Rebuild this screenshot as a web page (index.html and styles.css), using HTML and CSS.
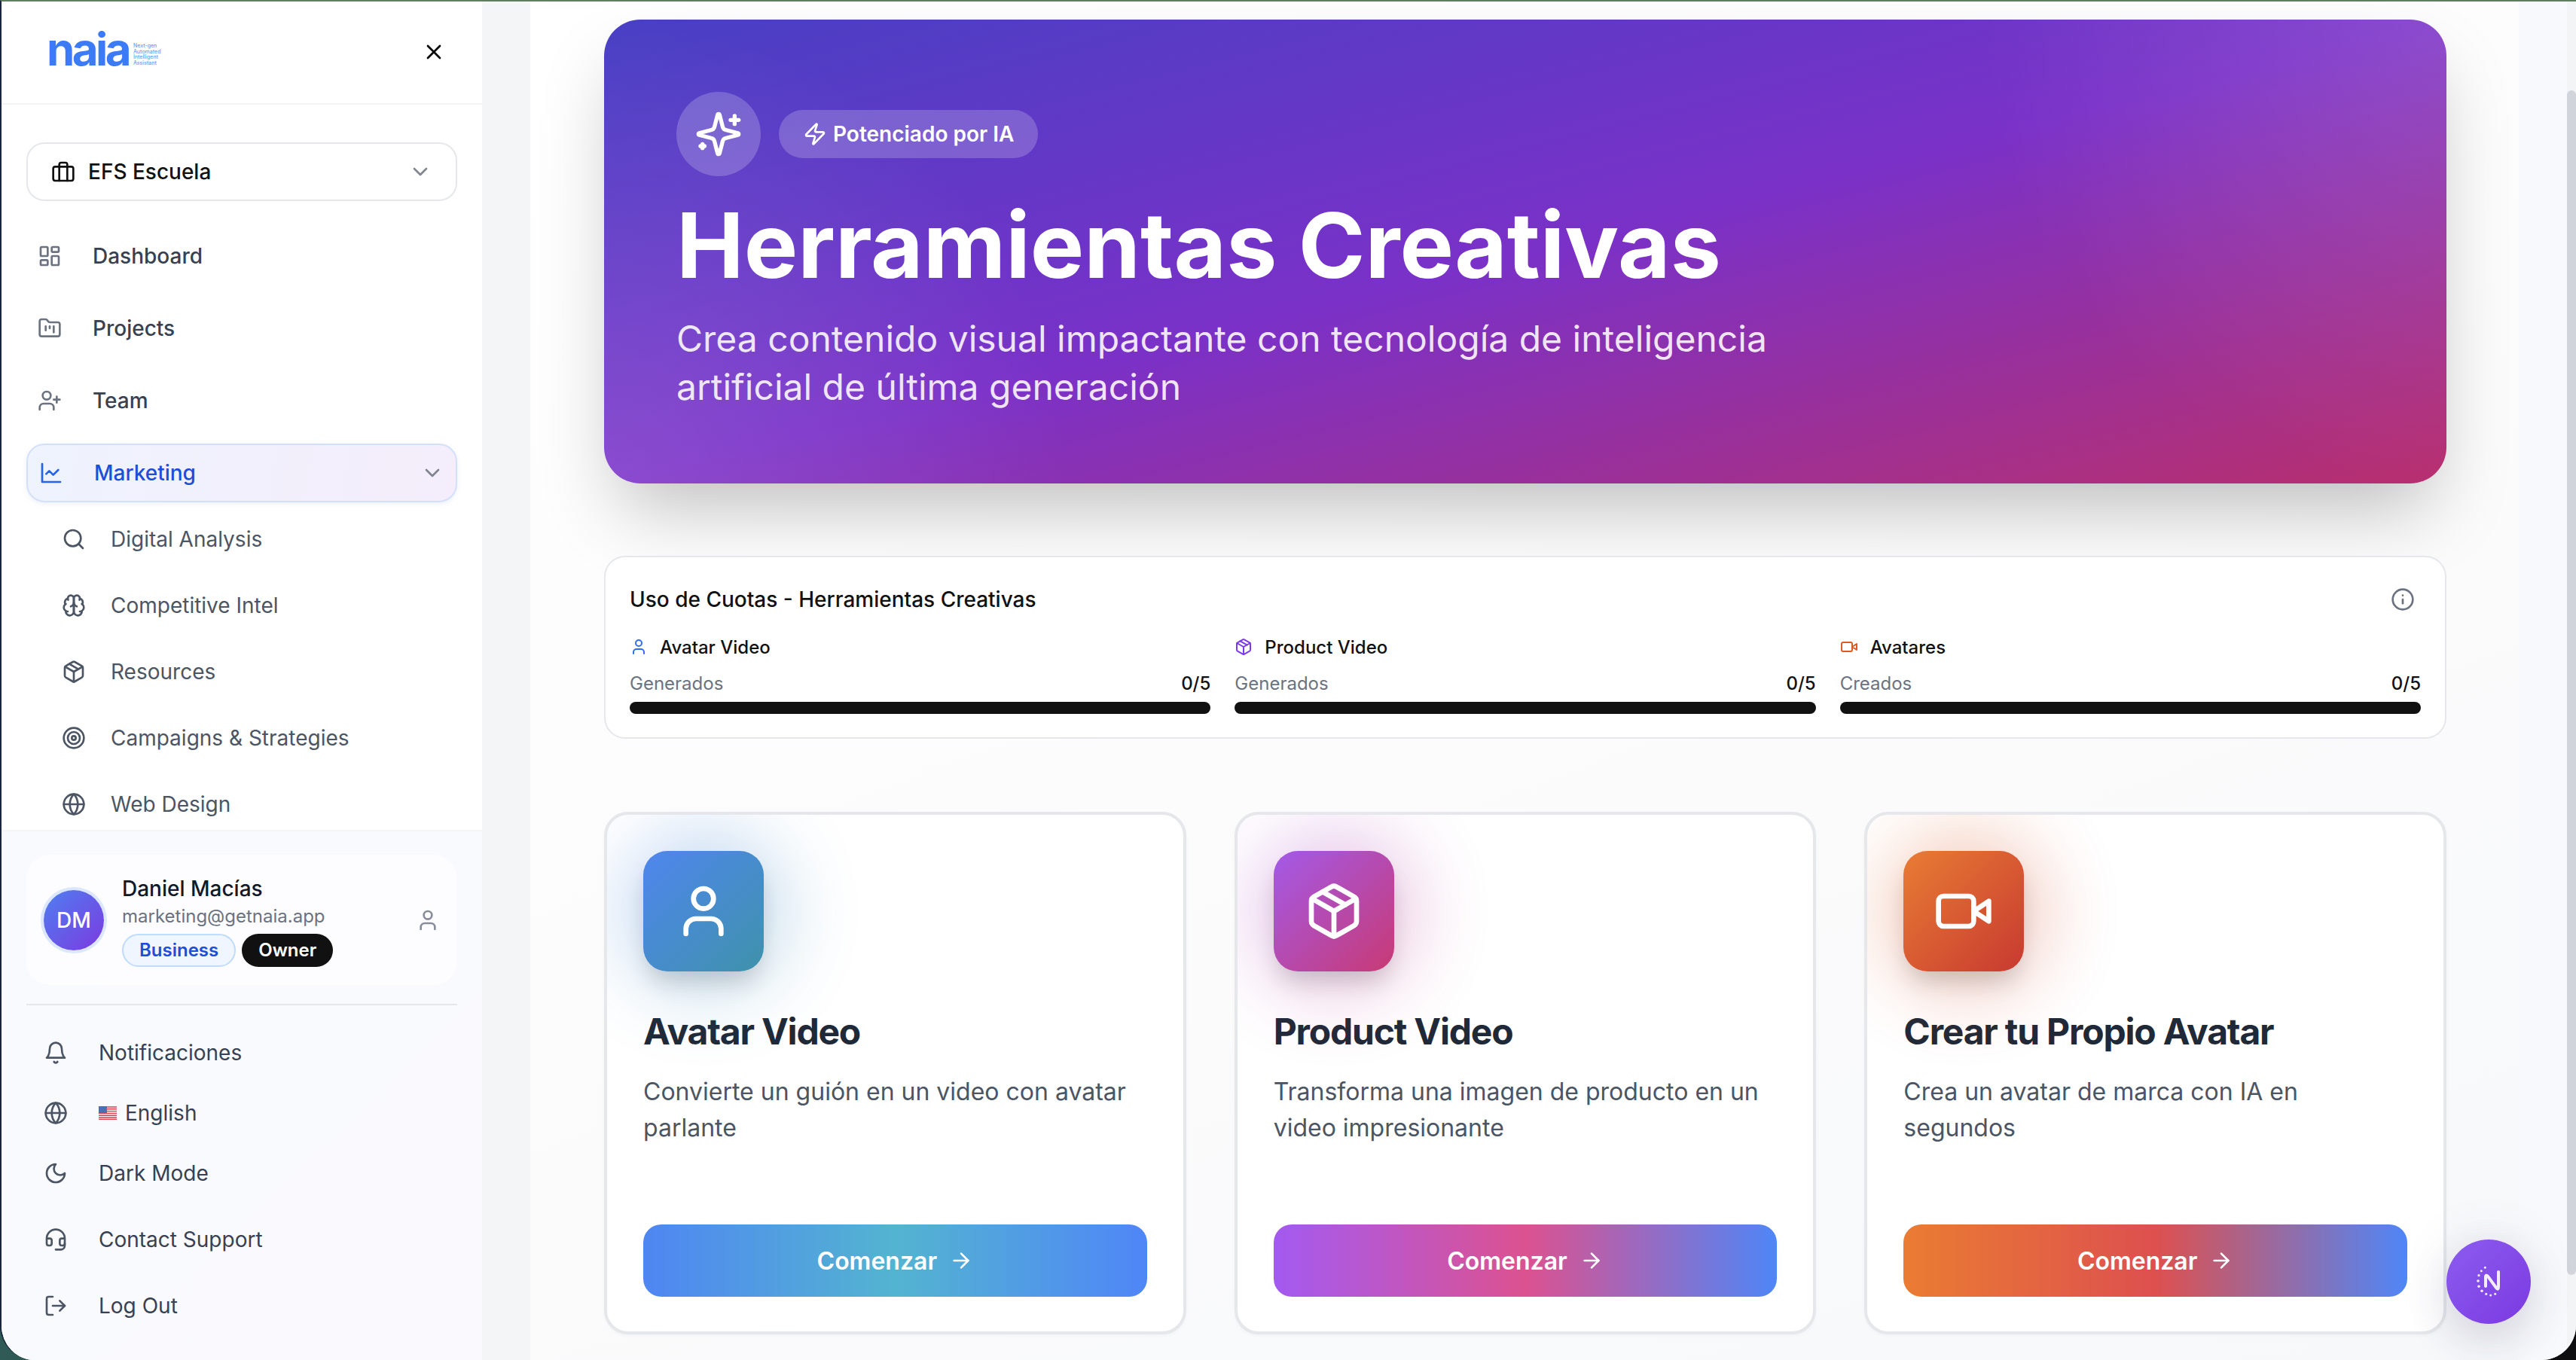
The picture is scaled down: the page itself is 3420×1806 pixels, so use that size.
FILE: index.html
```html
<!DOCTYPE html>
<html lang="es">
<head>
<meta charset="utf-8">
<title>Herramientas Creativas</title>
<link rel="stylesheet" href="styles.css">
</head>
<body>
<svg class="sprite" xmlns="http://www.w3.org/2000/svg">
  <symbol id="x" viewBox="0 0 24 24"><path d="M18 6 6 18"/><path d="m6 6 12 12"/></symbol>
  <symbol id="briefcase" viewBox="0 0 24 24"><path d="M16 21V5a2 2 0 0 0-2-2h-4a2 2 0 0 0-2 2v16"/><rect width="20" height="14" x="2" y="7" rx="2" ry="2"/></symbol>
  <symbol id="chev" viewBox="0 0 24 24"><path d="m6 9 6 6 6-6"/></symbol>
  <symbol id="dash" viewBox="0 0 24 24"><rect width="7" height="9" x="3" y="3" rx="1"/><rect width="7" height="5" x="14" y="3" rx="1"/><rect width="7" height="9" x="14" y="12" rx="1"/><rect width="7" height="5" x="3" y="16" rx="1"/></symbol>
  <symbol id="folder" viewBox="0 0 24 24"><path d="M4 20h16a2 2 0 0 0 2-2V8a2 2 0 0 0-2-2h-7.93a2 2 0 0 1-1.66-.9l-.82-1.2A2 2 0 0 0 7.93 3H4a2 2 0 0 0-2 2v13c0 1.1.9 2 2 2Z"/><path d="M8 10v4"/><path d="M12 10v2"/><path d="M16 10v6"/></symbol>
  <symbol id="userplus" viewBox="0 0 24 24"><path d="M16 21v-2a4 4 0 0 0-4-4H6a4 4 0 0 0-4 4v2"/><circle cx="9" cy="7" r="4"/><path d="M19 8v6"/><path d="M22 11h-6"/></symbol>
  <symbol id="chart" viewBox="0 0 24 24"><path d="M3 3v18h18"/><path d="m19 9-5 5-4-4-3 3"/></symbol>
  <symbol id="search" viewBox="0 0 24 24"><circle cx="11" cy="11" r="8"/><path d="m21 21-4.3-4.3"/></symbol>
  <symbol id="brain" viewBox="0 0 24 24"><path d="M12 5a3 3 0 1 0-5.997.125 4 4 0 0 0-2.526 5.77 4 4 0 0 0 .556 6.588A4 4 0 1 0 12 18Z"/><path d="M12 5a3 3 0 1 1 5.997.125 4 4 0 0 1 2.526 5.77 4 4 0 0 1-.556 6.588A4 4 0 1 1 12 18Z"/><path d="M15 13a4.5 4.5 0 0 1-3-4 4.5 4.5 0 0 1-3 4"/><path d="M17.599 6.5a3 3 0 0 0 .399-1.375"/><path d="M6.003 5.125A3 3 0 0 0 6.401 6.5"/><path d="M3.477 10.896a4 4 0 0 1 .585-.396"/><path d="M19.938 10.5a4 4 0 0 1 .585.396"/><path d="M6 18a4 4 0 0 1-1.967-.516"/><path d="M19.967 17.484A4 4 0 0 1 18 18"/></symbol>
  <symbol id="box" viewBox="0 0 24 24"><path d="m7.5 4.27 9 5.15"/><path d="M21 8a2 2 0 0 0-1-1.73l-7-4a2 2 0 0 0-2 0l-7 4A2 2 0 0 0 3 8v8a2 2 0 0 0 1 1.73l7 4a2 2 0 0 0 2 0l7-4A2 2 0 0 0 21 16Z"/><path d="m3.3 7 8.7 5 8.7-5"/><path d="M12 22V12"/></symbol>
  <symbol id="target" viewBox="0 0 24 24"><circle cx="12" cy="12" r="10"/><circle cx="12" cy="12" r="6"/><circle cx="12" cy="12" r="2"/></symbol>
  <symbol id="globe" viewBox="0 0 24 24"><circle cx="12" cy="12" r="10"/><path d="M12 2a14.5 14.5 0 0 0 0 20 14.5 14.5 0 0 0 0-20"/><path d="M2 12h20"/></symbol>
  <symbol id="user" viewBox="0 0 24 24"><path d="M19 21v-2a4 4 0 0 0-4-4H9a4 4 0 0 0-4 4v2"/><circle cx="12" cy="7" r="4"/></symbol>
  <symbol id="bell" viewBox="0 0 24 24"><path d="M6 8a6 6 0 0 1 12 0c0 7 3 9 3 9H3s3-2 3-9"/><path d="M10.3 21a1.94 1.94 0 0 0 3.4 0"/></symbol>
  <symbol id="moon" viewBox="0 0 24 24"><path d="M12 3a6 6 0 0 0 9 9 9 9 0 1 1-9-9Z"/></symbol>
  <symbol id="headset" viewBox="0 0 24 24"><path d="M3 11h3a2 2 0 0 1 2 2v3a2 2 0 0 1-2 2H5a2 2 0 0 1-2-2v-5Zm0 0a9 9 0 1 1 18 0m0 0v5a2 2 0 0 1-2 2h-1a2 2 0 0 1-2-2v-3a2 2 0 0 1 2-2h3Z"/><path d="M21 16v2a4 4 0 0 1-4 4h-5"/></symbol>
  <symbol id="logout" viewBox="0 0 24 24"><path d="M9 21H5a2 2 0 0 1-2-2V5a2 2 0 0 1 2-2h4"/><path d="m16 17 5-5-5-5"/><path d="M21 12H9"/></symbol>
  <symbol id="sparkles" viewBox="0 0 24 24"><path d="M9.937 15.5A2 2 0 0 0 8.5 14.063l-6.135-1.582a.5.5 0 0 1 0-.962L8.5 9.936A2 2 0 0 0 9.937 8.5l1.582-6.135a.5.5 0 0 1 .963 0L14.063 8.5A2 2 0 0 0 15.5 9.937l6.135 1.581a.5.5 0 0 1 0 .964L15.5 14.063a2 2 0 0 0-1.437 1.437l-1.582 6.135a.5.5 0 0 1-.963 0z"/><path d="M20 3v4"/><path d="M22 5h-4"/><path d="M4 17v2"/><path d="M5 18H3"/></symbol>
  <symbol id="zap" viewBox="0 0 24 24"><path d="M4 14a1 1 0 0 1-.78-1.63l9.9-10.2a.5.5 0 0 1 .86.46l-1.92 6.02A1 1 0 0 0 13 10h7a1 1 0 0 1 .78 1.63l-9.9 10.2a.5.5 0 0 1-.86-.46l1.92-6.02A1 1 0 0 0 11 14z"/></symbol>
  <symbol id="info" viewBox="0 0 24 24"><circle cx="12" cy="12" r="10"/><path d="M12 16v-4"/><path d="M12 8h.01"/></symbol>
  <symbol id="video" viewBox="0 0 24 24"><path d="m22 8-6 4 6 4V8Z"/><rect width="14" height="12" x="2" y="6" rx="2" ry="2"/></symbol>
  <symbol id="arrow" viewBox="0 0 24 24"><path d="M5 12h14"/><path d="m12 5 7 7-7 7"/></symbol>
</svg>

<div class="window">
  <aside class="sidebar">
    <header class="side-head">
      <div class="logo">
        <span class="logo-word">naia</span>
        <span class="logo-tag">Next-gen<br>Automated<br>Intelligent<br>Assistant</span>
      </div>
      <svg class="ic close"><use href="#x"/></svg>
    </header>

    <div class="side-scroll">
      <button class="workspace">
        <svg class="ic dark"><use href="#briefcase"/></svg>
        <span class="workspace-name">EFS Escuela</span>
        <svg class="ic chev"><use href="#chev"/></svg>
      </button>

      <nav class="nav">
        <a class="nav-item"><svg class="ic"><use href="#dash"/></svg><span>Dashboard</span></a>
        <a class="nav-item"><svg class="ic"><use href="#folder"/></svg><span>Projects</span></a>
        <a class="nav-item"><svg class="ic"><use href="#userplus"/></svg><span>Team</span></a>
        <a class="nav-item active"><svg class="ic"><use href="#chart"/></svg><span>Marketing</span><svg class="ic chev"><use href="#chev"/></svg></a>
      </nav>

      <div class="subnav">
        <a class="sub-item"><svg class="ic"><use href="#search"/></svg><span>Digital Analysis</span></a>
        <a class="sub-item"><svg class="ic"><use href="#brain"/></svg><span>Competitive Intel</span></a>
        <a class="sub-item"><svg class="ic"><use href="#box"/></svg><span>Resources</span></a>
        <a class="sub-item"><svg class="ic"><use href="#target"/></svg><span>Campaigns &amp; Strategies</span></a>
        <a class="sub-item"><svg class="ic"><use href="#globe"/></svg><span>Web Design</span></a>
      </div>
    </div>

    <footer class="side-foot">
      <div class="user-card">
        <div class="avatar">DM</div>
        <div class="user-info">
          <div class="user-name">Daniel Macías</div>
          <div class="user-mail">marketing@getnaia.app</div>
          <div class="badges">
            <span class="badge badge-plan">Business</span>
            <span class="badge badge-role">Owner</span>
          </div>
        </div>
        <svg class="ic user-ic"><use href="#user"/></svg>
      </div>
      <div class="divider"></div>
      <div class="links">
        <a class="link"><svg class="ic"><use href="#bell"/></svg><span>Notificaciones</span></a>
        <a class="link"><svg class="ic"><use href="#globe"/></svg>
          <svg class="flag" viewBox="0 0 24 18" xmlns="http://www.w3.org/2000/svg">
            <rect width="24" height="18" fill="#f4f4f6"/>
            <path d="M0 1h24M0 3.8h24M0 6.6h24M0 9.4h24M0 12.2h24M0 15h24M0 17.4h24" stroke="#d9424f" stroke-width="1.4"/>
            <rect width="11" height="9" y="0" fill="#4a6fb5"/>
          </svg>
          <span class="lang">English</span></a>
        <a class="link"><svg class="ic"><use href="#moon"/></svg><span>Dark Mode</span></a>
        <a class="link gap-top"><svg class="ic"><use href="#headset"/></svg><span>Contact Support</span></a>
        <a class="link gap-top"><svg class="ic"><use href="#logout"/></svg><span>Log Out</span></a>
      </div>
    </footer>
  </aside>

  <main class="main">
    <div class="content">
      <section class="hero">
        <div class="hero-top">
          <div class="hero-icon"><svg class="ic hero-spark"><use href="#sparkles"/></svg></div>
          <div class="hero-badge"><svg class="ic"><use href="#zap"/></svg><span>Potenciado por IA</span></div>
        </div>
        <h1 class="hero-title">Herramientas Creativas</h1>
        <p class="hero-sub">Crea contenido visual impactante con tecnología de inteligencia artificial de última generación</p>
      </section>

      <section class="quota">
        <div class="quota-head">
          <h2 class="quota-title">Uso de Cuotas - Herramientas Creativas</h2>
          <span class="quota-info"><svg class="ic"><use href="#info"/></svg></span>
        </div>
        <div class="quota-grid">
          <div class="quota-col">
            <div class="quota-label"><svg class="ic q-blue"><use href="#user"/></svg><span>Avatar Video</span></div>
            <div class="quota-row"><span class="muted">Generados</span><span>0/5</span></div>
            <div class="bar"></div>
          </div>
          <div class="quota-col">
            <div class="quota-label"><svg class="ic q-purple"><use href="#box"/></svg><span>Product Video</span></div>
            <div class="quota-row"><span class="muted">Generados</span><span>0/5</span></div>
            <div class="bar"></div>
          </div>
          <div class="quota-col">
            <div class="quota-label"><svg class="ic q-orange"><use href="#video"/></svg><span>Avatares</span></div>
            <div class="quota-row"><span class="muted">Creados</span><span>0/5</span></div>
            <div class="bar"></div>
          </div>
        </div>
      </section>

      <section class="cards">
        <article class="card card-blue">
          <div class="tile-wrap"><div class="glow"></div><div class="tile"><svg class="ic"><use href="#user"/></svg></div></div>
          <h3 class="card-title">Avatar Video</h3>
          <p class="card-desc">Convierte un guión en un video con avatar parlante</p>
          <button class="cta"><span>Comenzar</span><svg class="ic"><use href="#arrow"/></svg></button>
        </article>
        <article class="card card-pink">
          <div class="tile-wrap"><div class="glow"></div><div class="tile"><svg class="ic"><use href="#box"/></svg></div></div>
          <h3 class="card-title">Product Video</h3>
          <p class="card-desc">Transforma una imagen de producto en un video impresionante</p>
          <button class="cta"><span>Comenzar</span><svg class="ic"><use href="#arrow"/></svg></button>
        </article>
        <article class="card card-orange">
          <div class="tile-wrap"><div class="glow"></div><div class="tile"><svg class="ic"><use href="#video"/></svg></div></div>
          <h3 class="card-title">Crear tu Propio Avatar</h3>
          <p class="card-desc">Crea un avatar de marca con IA en segundos</p>
          <button class="cta"><span>Comenzar</span><svg class="ic"><use href="#arrow"/></svg></button>
        </article>
      </section>
    </div>
  </main>

  <div class="scrollbar"><div class="thumb"></div></div>

  <button class="fab" aria-label="Asistente">
    <svg class="fab-ic" viewBox="0 0 64 64" xmlns="http://www.w3.org/2000/svg">
      <path class="fab-n" d="M28 38V26q0-4 3-1l11 15q3 4 3-2V19"/>
      <g class="fab-dots">
        <circle cx="27.3" cy="13.3" r="1.5"/><circle cx="22.3" cy="17.7" r="1.5"/><circle cx="19" cy="23.7" r="1.6"/>
        <circle cx="18" cy="31" r="1.8"/><circle cx="19" cy="38.3" r="1.8"/><circle cx="23" cy="44.3" r="1.8"/>
        <circle cx="28.7" cy="48.3" r="1.6"/><circle cx="34.7" cy="50" r="1.5"/><circle cx="40.7" cy="48.3" r="1.5"/>
      </g>
    </svg>
  </button>
</div>
</body>
</html>
```
FILE: styles.css
```css
* { box-sizing: border-box; }
html, body { margin: 0; padding: 0; height: 100%; }
body {
  width: 3420px;
  height: 1806px;
  overflow: hidden;
  font-family: "Inter", "Liberation Sans", sans-serif;
  background: linear-gradient(90deg, #2f5a55 0%, #1a1f22 50%, #0e0e10 100%);
  color: #111;
}
.sprite { display: none; }
.ic {
  width: 32px;
  height: 32px;
  flex: none;
  fill: none;
  stroke: currentColor;
  stroke-width: 2;
  stroke-linecap: round;
  stroke-linejoin: round;
}
h1, h2, h3, p { margin: 0; }
button { font-family: inherit; border: 0; padding: 0; }

.window {
  position: relative;
  display: flex;
  height: 1806px;
  border-top: 2px solid #5f7d5f;
  border-left: 2px solid #18253c;
  border-radius: 0 0 46px 46px;
  overflow: hidden;
  background: #f8f9fc;
}

/* Sidebar */
.sidebar {
  width: 638px;
  flex: none;
  display: flex;
  flex-direction: column;
  background: #fff;
  z-index: 2;
}
.side-head {
  height: 137px;
  flex: none;
  display: flex;
  align-items: center;
  justify-content: space-between;
  padding: 0 48px 2px 60px;
  border-bottom: 2px solid #f3f4f6;
}
.logo { display: flex; align-items: flex-end; gap: 6px; color: #3b7bf8; height: 60px; }
.logo-word {
  font-size: 60px;
  line-height: 60px;
  font-weight: 700;
  letter-spacing: -3.6px;
  margin-bottom: 4px;
}
.logo-tag {
  font-size: 7px;
  line-height: 7.6px;
  font-weight: 500;
  color: #6d9ef8;
  margin-bottom: 11px;
}
.close { color: #000; }

.side-scroll {
  flex: 1;
  min-height: 0;
  overflow: hidden;
  padding: 50px 33px 0;
}
.workspace {
  display: flex;
  align-items: center;
  width: 572px;
  height: 78px;
  padding: 0 31px;
  gap: 17px;
  background: #fff;
  border: 2px solid #e5e7eb;
  border-radius: 24px;
  color: #111;
}
.workspace-name { font-size: 28px; font-weight: 500; flex: 1; text-align: left; }
.chev { color: #6b7280; opacity: .85; }
.dark { color: #111; }

.nav { display: flex; flex-direction: column; gap: 18px; margin-top: 34px; }
.nav-item {
  display: flex;
  align-items: center;
  height: 78px;
  padding: 0 15px;
  gap: 41px;
  font-size: 28px;
  font-weight: 500;
  color: #374151;
  border-radius: 24px;
}
.nav-item .ic { color: #6b7280; }
.nav-item.active {
  background: linear-gradient(100deg, #eef3fd, #f5edfb);
  border: 2px solid #d3e0fa;
  box-shadow: 0 2px 6px rgba(80, 100, 200, .10);
  color: #1d4ed8;
  padding: 0 15px;
}
.nav-item.active > span { flex: 1; }
.nav-item.active .ic:first-child { color: #2563eb; }
.nav-item.active .chev { color: #6b7280; }

.subnav { margin-top: 5px; padding-left: 30px; }
.sub-item {
  display: flex;
  align-items: center;
  height: 88px;
  gap: 33px;
  padding-left: 17px;
  font-size: 28px;
  color: #4b5563;
}
.sub-item .ic { color: #4b5563; }

.side-foot {
  flex: none;
  height: 704px;
  padding: 31px 33px 0;
  border-top: 2px solid #f3f4f6;
  background: linear-gradient(135deg, #f9fafe, #fafafe);
}
.user-card {
  display: flex;
  align-items: center;
  height: 173px;
  padding: 0 23px 0 20px;
  gap: 21px;
  border-radius: 32px;
  background: rgba(255, 255, 255, .6);
}
.avatar {
  width: 80px;
  height: 80px;
  margin: 0 3px;
  flex: none;
  border-radius: 50%;
  background: linear-gradient(135deg, #4f7ff0, #7c3ae0);
  box-shadow: 0 0 0 4px #dbe7fc;
  color: #fff;
  font-size: 28px;
  font-weight: 500;
  display: flex;
  align-items: center;
  justify-content: center;
}
.user-info { flex: 1; min-width: 0; }
.user-name { font-size: 28px; line-height: 40px; font-weight: 500; color: #111827; }
.user-mail { font-size: 24px; line-height: 34px; color: #6b7280; margin-bottom: 6px; }
.badges { display: flex; gap: 8px; }
.badge {
  height: 44px;
  display: flex;
  align-items: center;
  border-radius: 22px;
  font-size: 24px;
  font-weight: 600;
  padding: 0 22px;
}
.badge-plan { background: #eff6ff; border: 2px solid #bfdbfe; color: #1d4ed8; padding: 0 21px; }
.badge-role { background: #111; color: #fff; }
.user-ic { color: #6b7280; opacity: .8; }

.divider { height: 2px; margin-top: 25px; background: #e5e7eb; }
.links { margin-top: 23px; display: flex; flex-direction: column; }
.link {
  display: flex;
  align-items: center;
  height: 80px;
  padding-left: 23px;
  gap: 41px;
  font-size: 28px;
  color: #374151;
}
.link .ic { color: #4b5563; }
.gap-top { margin-top: 8px; }
.flag { width: 24px; height: 18px; flex: none; margin-right: -30px; }

/* Main */
.main {
  flex: 1;
  min-width: 0;
  padding: 0 64px;
  background: linear-gradient(90deg, #f4f5f7 0, #f8f9fc 100%);
}
.content {
  height: 100%;
  padding: 24px 96px 0 98px;
  background: linear-gradient(160deg, #ffffff 0%, #fbfbfc 60%, #f7f8fa 100%);
}
.hero {
  height: 616px;
  padding: 96px;
  border-radius: 48px;
  background:
    radial-gradient(circle at 100% 0, rgba(255,255,255,.13), transparent 620px),
    radial-gradient(circle at 0 100%, rgba(255,255,255,.13), transparent 620px),
    linear-gradient(to bottom right, #4840c4 0%, #7a31c8 50%, #b82f6e 100%);
  box-shadow: 0 50px 100px -20px rgba(0, 0, 0, .25);
  color: #fff;
}
.hero-top { display: flex; align-items: center; gap: 24px; }
.hero-icon {
  width: 112px;
  height: 112px;
  border-radius: 50%;
  background: rgba(255, 255, 255, .2);
  display: flex;
  align-items: center;
  justify-content: center;
}
.hero-spark { width: 64px; height: 64px; }
.hero-badge {
  height: 64px;
  display: flex;
  align-items: center;
  gap: 8px;
  padding: 0 32px;
  border-radius: 32px;
  background: rgba(255, 255, 255, .2);
  font-size: 28px;
  font-weight: 600;
}
.hero-title {
  margin-top: 32px;
  font-size: 120px;
  line-height: 120px;
  font-weight: 700;
}
.hero-sub {
  margin-top: 32px;
  max-width: 1536px;
  font-size: 48px;
  line-height: 64px;
  font-weight: 400;
  color: rgba(255, 255, 255, .88);
}

.quota {
  height: 243px;
  margin-top: 96px;
  padding: 32px 32px 0;
  border: 2px solid #e5e7eb;
  border-radius: 28px;
  background: #fff;
}
.quota-head { display: flex; align-items: center; justify-content: space-between; height: 48px; }
.quota-title { font-size: 28px; font-weight: 500; color: #111; }
.quota-info { width: 48px; height: 48px; display: flex; align-items: center; justify-content: center; color: #6b7280; }
.quota-grid { display: grid; grid-template-columns: repeat(3, 1fr); gap: 32px; margin-top: 23px; }
.quota-label { display: flex; align-items: center; gap: 16px; height: 32px; font-size: 24px; font-weight: 500; }
.quota-label .ic { width: 24px; height: 24px; }
.q-blue { color: #2f6fed; }
.q-purple { color: #7c3aed; }
.q-orange { color: #dd5b22; }
.quota-row {
  display: flex;
  justify-content: space-between;
  margin-top: 17px;
  font-size: 24px;
  line-height: 32px;
  font-weight: 500;
}
.muted { color: #6b7280; font-weight: 400; }
.bar { height: 16px; margin-top: 8px; border-radius: 8px; background: #111; }

.cards { display: grid; grid-template-columns: repeat(3, 1fr); gap: 64px; margin-top: 97px; }
.card {
  height: 694px;
  padding: 48px 48px 0;
  border: 4px solid #e5e7eb;
  border-radius: 32px;
  background: #fff;
  overflow: hidden;
  box-shadow: 0 2px 4px rgba(0, 0, 0, .03);
}
.tile-wrap { position: relative; width: 160px; height: 160px; }
.glow {
  position: absolute;
  inset: -28px;
  border-radius: 50%;
  filter: blur(52px);
  opacity: .32;
}
.tile {
  position: relative;
  width: 160px;
  height: 160px;
  border-radius: 32px;
  display: flex;
  align-items: center;
  justify-content: center;
  color: #fff;
  box-shadow: 0 20px 30px -6px rgba(0, 0, 0, .16);
}
.tile .ic { width: 80px; height: 80px; }
.card-title {
  margin-top: 48px;
  font-size: 48px;
  line-height: 64px;
  font-weight: 700;
  letter-spacing: -1.2px;
  color: #1f2937;
}
.card-desc {
  margin-top: 24px;
  height: 96px;
  font-size: 32px;
  line-height: 48px;
  color: #4b5563;
}
.cta {
  width: 100%;
  height: 96px;
  margin-top: 104px;
  display: flex;
  align-items: center;
  justify-content: center;
  gap: 16px;
  border-radius: 24px;
  color: #fff;
  font-size: 32px;
  font-weight: 600;
}
.card-blue .tile, .card-blue .glow { background: linear-gradient(135deg, #4f86ee, #3f92ab); }
.card-blue .cta { background: linear-gradient(90deg, #4f86f2, #53b4d0 50%, #4f86f7); }
.card-pink .tile, .card-pink .glow { background: linear-gradient(135deg, #a35ae8, #c83a74); }
.card-pink .cta { background: linear-gradient(90deg, #a35af0, #dc5290 50%, #4f86f7); }
.card-orange .tile, .card-orange .glow { background: linear-gradient(135deg, #e87c34, #c83a30); }
.card-orange .cta { background: linear-gradient(90deg, #ea7c32, #dd504f 50%, #4f86f7); }

/* Scrollbar */
.scrollbar { width: 12px; flex: none; background: #f3f4f6; }
.thumb { height: 1573px; margin-top: 118px; border-radius: 6px; background: #d1d5db; }

/* Floating action button */
.fab {
  position: absolute;
  right: 60px;
  bottom: 48px;
  width: 112px;
  height: 112px;
  border-radius: 50%;
  background: linear-gradient(135deg, #8b5cf0, #7c3ae0);
  box-shadow: 0 24px 60px rgba(60, 50, 90, .14), 0 0 70px rgba(90, 80, 130, .10);
  display: flex;
  align-items: center;
  justify-content: center;
}
.fab-ic { width: 64px; height: 64px; }
.fab-n { fill: none; stroke: #f3eefe; stroke-width: 4; stroke-linecap: round; stroke-linejoin: round; }
.fab-dots { fill: #f3eefe; }
```
